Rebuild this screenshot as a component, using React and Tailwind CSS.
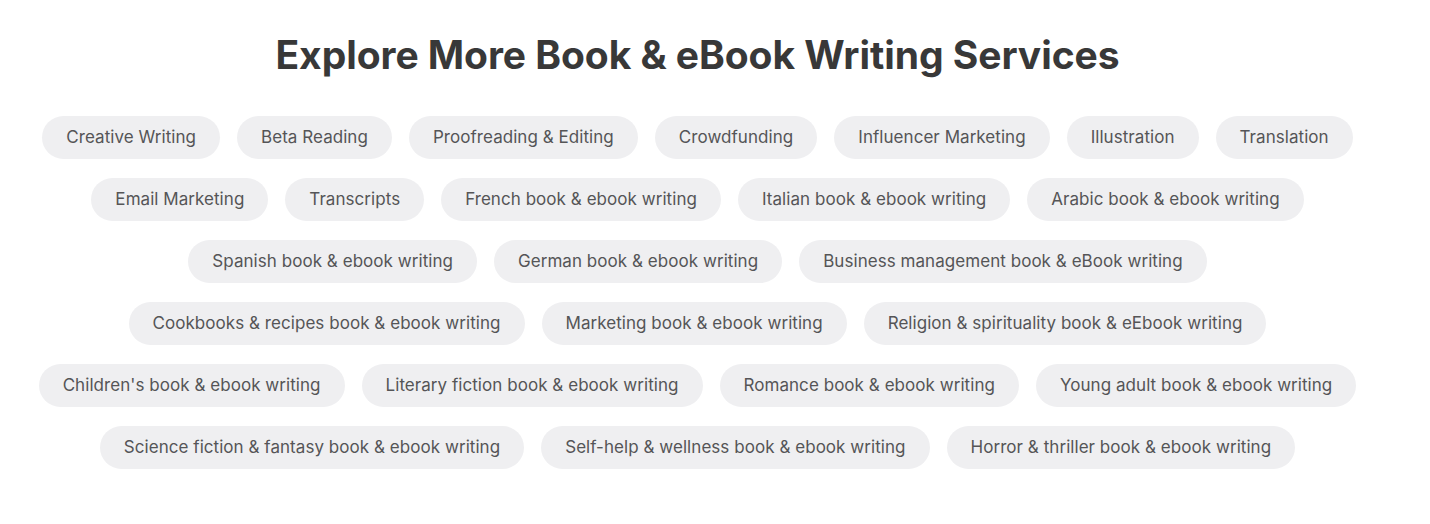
const rows = [
  ["Creative Writing", "Beta Reading", "Proofreading & Editing", "Crowdfunding", "Influencer Marketing", "Illustration", "Translation"],
  ["Email Marketing", "Transcripts", "French book & ebook writing", "Italian book & ebook writing", "Arabic book & ebook writing"],
  ["Spanish book & ebook writing", "German book & ebook writing", "Business management book & eBook writing"],
  ["Cookbooks & recipes book & ebook writing", "Marketing book & ebook writing", "Religion & spirituality book & eEbook writing"],
  ["Children's book & ebook writing", "Literary fiction book & ebook writing", "Romance book & ebook writing", "Young adult book & ebook writing"],
  ["Science fiction & fantasy book & ebook writing", "Self-help & wellness book & ebook writing", "Horror & thriller book & ebook writing"],
];

export default function App() {
  return (
    <div className="w-[1430px] h-[524px] bg-white pr-[35px] font-['Inter',sans-serif]">
      <h2 className="pt-[30px] text-center text-[39px] leading-[50px] font-bold text-[#383838] tracking-[-0.05px]">
        Explore More Book &amp; eBook Writing Services
      </h2>
      <div className="mt-[36px] flex flex-col gap-[19px]">
        {rows.map((row, i) => (
          <div key={i} className="flex justify-center gap-[17px]">
            {row.map((t) => (
              <span
                key={t}
                className="h-[43px] flex items-center rounded-full bg-[#efeff1] px-[24px] text-[17px] tracking-[0.05px] text-[#555557] whitespace-nowrap"
              >
                {t}
              </span>
            ))}
          </div>
        ))}
      </div>
    </div>
  );
}
